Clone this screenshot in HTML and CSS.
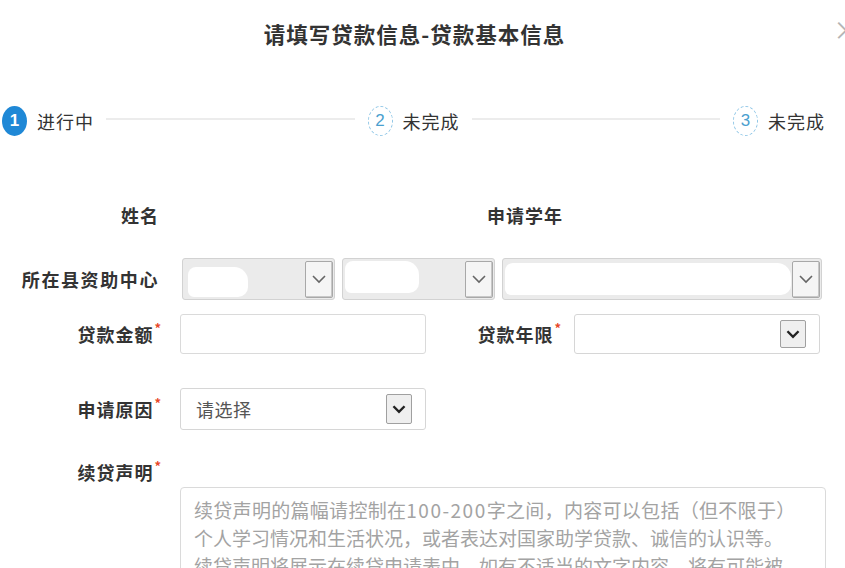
FILE: index.html
```html
<!DOCTYPE html>
<html lang="zh-CN">
<head>
<meta charset="utf-8">
<title>请填写贷款信息</title>
<link rel="stylesheet" href="styles.css">
</head>
<body>
<div class="dialog">
  <div class="title">请填写贷款信息-贷款基本信息</div>
  <span class="close">×</span>

  <div class="steps">
    <div class="step">
      <span class="num active">1</span>
      <span class="step-text">进行中</span>
    </div>
    <div class="line"></div>
    <div class="step">
      <span class="num pending">2</span>
      <span class="step-text">未完成</span>
    </div>
    <div class="line"></div>
    <div class="step">
      <span class="num pending">3</span>
      <span class="step-text">未完成</span>
    </div>
  </div>

  <div class="form">
    <div class="row r1">
      <label class="label nostar">姓名</label>
      <div class="field"></div>
      <label class="label label2 nostar">申请学年</label>
      <div class="field"></div>
    </div>

    <div class="row r2">
      <label class="label nostar">所在县资助中心</label>
      <div class="selects">
        <div class="select disabled s1"><span class="blob b1"></span><span class="arrow thin"><svg viewBox="0 0 26 36" width="26" height="36"><path d="M7 15 L13 21 L19 15" fill="none" stroke="#666" stroke-width="1.6"/></svg></span></div>
        <div class="select disabled s2"><span class="blob b2"></span><span class="arrow thin"><svg viewBox="0 0 26 36" width="26" height="36"><path d="M7 15 L13 21 L19 15" fill="none" stroke="#666" stroke-width="1.6"/></svg></span></div>
        <div class="select disabled s3"><span class="blob b3"></span><span class="arrow thin"><svg viewBox="0 0 26 36" width="26" height="36"><path d="M7 15 L13 21 L19 15" fill="none" stroke="#666" stroke-width="1.6"/></svg></span></div>
      </div>
    </div>

    <div class="row r3">
      <label class="label">贷款金额<i>*</i></label>
      <div class="input"></div>
      <label class="label label2">贷款年限<i>*</i></label>
      <div class="select open"><span class="sel-text"></span><span class="arrow bold"><svg viewBox="0 0 26 28" width="26" height="28"><path d="M7 11 L13 17 L19 11" fill="none" stroke="#222" stroke-width="2.6"/></svg></span></div>
    </div>

    <div class="row r4">
      <label class="label">申请原因<i>*</i></label>
      <div class="select open"><span class="sel-text">请选择</span><span class="arrow bold tall"><svg viewBox="0 0 26 30" width="26" height="30"><path d="M7 12 L13 18 L19 12" fill="none" stroke="#222" stroke-width="2.6"/></svg></span></div>
    </div>

    <div class="row r5">
      <label class="label">续贷声明<i>*</i></label>
    </div>

    <div class="textarea">
      <p>续贷声明的篇幅请控制在<span class="dg">100-200</span>字之间，内容可以包括（但不限于）</p>
      <p>个人学习情况和生活状况，或者表达对国家助学贷款、诚信的认识等。</p>
      <p>续贷声明将展示在续贷申请表中，如有不适当的文字内容，将有可能被</p>
    </div>
  </div>
</div>
</body>
</html>
```

FILE: styles.css
```css
* { box-sizing: border-box; }

html, body {
  margin: 0;
  padding: 0;
  background: #fff;
}

body {
  width: 845px;
  height: 568px;
  overflow: hidden;
  font-family: "Noto Sans CJK SC", "Noto Sans", "Liberation Sans", sans-serif;
  color: #333;
}

.dialog {
  position: relative;
  width: 845px;
  height: 568px;
}

.title {
  height: 68px;
  line-height: 68px;
  text-align: center;
  font-size: 21.5px;
  font-weight: bold;
  letter-spacing: 1px;
  color: #333;
  padding-right: 16px;
}

.close {
  position: absolute;
  left: 833px;
  top: 14px;
  font-size: 26px;
  line-height: 30px;
  color: #b5b5b5;
}

/* steps */
.steps {
  display: flex;
  align-items: center;
  margin-top: 38px;
  height: 30px;
  padding-left: 2px;
  padding-right: 20px;
}

.step {
  display: flex;
  align-items: center;
  gap: 10px;
}

.num {
  width: 25px;
  height: 30px;
  border-radius: 50%;
  display: flex;
  align-items: center;
  justify-content: center;
  font-size: 17px;
  font-family: "Liberation Sans", sans-serif;
}

.num.active {
  background: #1f88d6;
  color: #fff;
  font-weight: bold;
}

.num.pending {
  border: 1.5px dashed #8fc6e6;
  color: #4a9fcf;
}

.step-text {
  font-size: 18px;
  letter-spacing: 1px;
  color: #333;
}

.line {
  flex: 1;
  height: 2px;
  background: #ececec;
  margin: -4px 13px 0 12px;
}

/* form */
.form {
  margin-top: 59px;
}

.row {
  display: flex;
  align-items: center;
}

.r1 { height: 40px; }
.r2 { height: 42px; margin-top: 23px; }
.r3 { height: 40px; margin-top: 14px; }
.r4 { height: 42px; margin-top: 34px; }
.r5 { height: 24px; margin-top: 30px; }

.label {
  width: 162px;
  text-align: right;
  font-size: 18px;
  font-weight: bold;
  letter-spacing: 1px;
  color: #333;
  white-space: nowrap;
  margin-right: 18px;
}

.label.nostar { padding-right: 3px; }

.r2 .label { letter-spacing: 1.6px; }

.label i {
  font-style: normal;
  color: #e8482c;
  font-size: 13px;
  vertical-align: top;
  position: relative;
  top: -3px;
  margin-left: 1px;
}

.label2 {
  width: 136px;
  margin-right: 12px;
}

.r1 .label2 { width: 140px; margin-right: 8px; }

.field {
  width: 246px;
  height: 40px;
}

.selects {
  display: flex;
  gap: 7px;
  margin-left: 2px;
}

.select {
  position: relative;
  height: 42px;
  border: 1px solid #d6d6d6;
  border-radius: 3px;
  display: flex;
  align-items: center;
  justify-content: space-between;
  background: #fff;
}

.select.disabled {
  background: #ebebeb;
  border-color: #d2d2d2;
  padding: 0 1px 0 5px;
}

.s1 { width: 153px; }
.s2 { width: 153px; }
.s3 { width: 320px; }

.blob {
  display: block;
  background: #fff;
  border-radius: 8px 14px 10px 6px;
}

.b1 { width: 60px; height: 30px; margin-top: 6px; }
.b2 { width: 74px; height: 32px; margin-top: -4px; margin-left: -3px; }
.b3 { width: 286px; height: 32px; margin-left: -3px; }

.arrow {
  display: flex;
  align-items: center;
  justify-content: center;
  background: #f2f2f2;
  border: 1px solid #9e9e9e;
  border-radius: 2px;
}

.arrow.thin {
  width: 28px;
  height: 37px;
  background: #f5f5f5;
  border-color: #a8a8a8;
  box-shadow: inset -1px -1px 0 #c8c8c8;
}

.arrow.bold {
  width: 26px;
  height: 28px;
  margin-right: 13px;
  background: #efefef;
  border-color: #a0a0a0;
}

.arrow.tall { height: 30px; }

.input {
  width: 246px;
  height: 40px;
  border: 1px solid #dadada;
  border-radius: 3px;
  background: #fff;
}

.select.open {
  width: 246px;
}

.r3 .select.open { height: 40px; }

.sel-text {
  padding-left: 15px;
  font-size: 18px;
  letter-spacing: 0.5px;
  color: #555;
}

.textarea {
  margin: 3px 19px 0 180px;
  height: 120px;
  border: 1px solid #dadada;
  border-radius: 4px;
  padding: 8px 0 0 13px;
  color: #a3a3a3;
  font-size: 19px;
  line-height: 28px;
}

.textarea p {
  margin: 0;
  white-space: nowrap;
}

.textarea .dg { letter-spacing: 1.5px; }
.textarea p:first-child { letter-spacing: 0.3px; }
```
